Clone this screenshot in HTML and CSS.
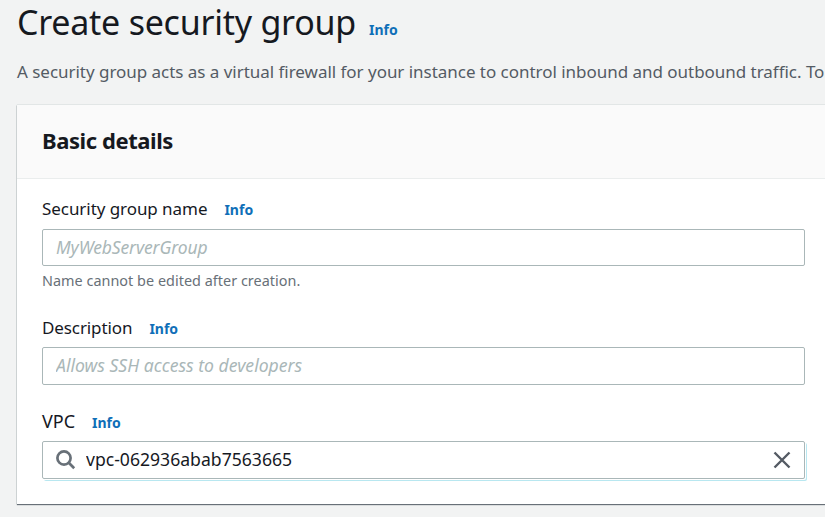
FILE: index.html
```html
<!DOCTYPE html>
<html lang="en">
<head>
<meta charset="utf-8">
<title>Create security group</title>
<link rel="stylesheet" href="styles.css">
</head>
<body>
<main class="page">
  <header class="page-header">
    <h1><span class="title">Create security group</span><a class="info">Info</a></h1>
    <p class="intro">A security group acts as a virtual firewall for your instance to control inbound and outbound traffic. To</p>
  </header>
  <section class="panel">
    <div class="panel-header"><h2>Basic details</h2></div>
    <form class="panel-body">
      <div class="field">
        <div class="label-row"><label class="l-name" for="name">Security group name</label><a class="info">Info</a></div>
        <input id="name" class="i-name" placeholder="MyWebServerGroup">
        <p class="hint">Name cannot be edited after creation.</p>
      </div>
      <div class="field">
        <div class="label-row"><label class="l-desc" for="desc">Description</label><a class="info">Info</a></div>
        <input id="desc" class="i-desc" placeholder="Allows SSH access to developers">
      </div>
      <div class="field vpc">
        <div class="label-row"><label class="l-vpc" for="vpc">VPC</label><a class="info">Info</a></div>
        <div class="search">
          <svg class="glass" viewBox="0 0 20 20"><circle cx="8" cy="8" r="6.6"/><path d="M12.8 12.8 18.2 18.2"/></svg>
          <input id="vpc" value="vpc-062936abab7563665">
          <svg class="close" viewBox="0 0 18 18"><path d="M1.5 1.5 16.5 16.5M16.5 1.5 1.5 16.5"/></svg>
        </div>
      </div>
    </form>
  </section>
</main>
</body>
</html>
```
FILE: styles.css
```css
* { box-sizing: border-box; }
body { margin: 0; background: #f2f3f3; color: #16191f; font-family: "Noto Sans", sans-serif; overflow: hidden; }
h1, h2, p { margin: 0; font-weight: 400; }
.page { height: 517px; padding-left: 17px; }
.page-header { height: 105px; }
h1 { display: flex; align-items: baseline; gap: 13px; height: 60px; line-height: 44px; }
.title { width: 339px; font-size: 34px; letter-spacing: -0.25px; white-space: nowrap; }
.info { color: #0f6fb8; font-size: 14px; font-weight: 700; line-height: 20px; }
.intro { color: #545b64; font-size: 17px; line-height: 24px; letter-spacing: -0.03px; white-space: nowrap; }
.panel { height: 399px; background: #fff; box-shadow: 0 1px 1px #687078, 0 0 1px #95a5a6; }
.panel-header { height: 74px; padding: 20px 25px; background: #fafafa; border-bottom: 1px solid #eaeded; }
h2 { font-size: 22px; font-weight: 700; line-height: 30px; letter-spacing: -0.42px; }
.panel-body { padding: 18px 20px 0 25px; }
.field { margin-bottom: 24px; }
.label-row { display: flex; align-items: baseline; gap: 17px; height: 32px; line-height: 24px; }
.field + .field .label-row { padding-top: 1px; }
.field.vpc .label-row { padding-top: 0; }
label { font-size: 17px; white-space: nowrap; }
.l-name { letter-spacing: -0.06px; }
.l-desc { letter-spacing: -0.1px; }
.l-vpc { font-size: 18px; }
input { display: block; width: 100%; height: 37px; padding: 0 13px 2px; border: 1px solid #aab7b8; border-radius: 2px; color: #16191f; font: 17.6px "Noto Sans", sans-serif; }
input::placeholder { color: #aab7b8; font-style: italic; opacity: 1; }
.i-name { font-size: 17.5px; letter-spacing: -0.12px; }
.i-desc { height: 38px; font-size: 17.6px; }
.hint { margin-top: 5px; color: #687078; font-size: 14.4px; line-height: 20px; letter-spacing: 0.03px; }
.search { display: flex; align-items: center; height: 38px; padding: 0 13px; border: 1px solid #aab7b8; border-radius: 2px; box-shadow: 1px 1px 0 #fff, 2px 2px 0 #b8e7f0; }
.search input { flex: 1; border: 0; height: 34px; padding: 0 10px 2px; }
svg { fill: none; stroke: #545b64; stroke-width: 2.4; }
.glass { width: 20px; height: 20px; stroke: #687078; stroke-width: 2.7; }
.close { width: 18px; height: 18px; }
```
